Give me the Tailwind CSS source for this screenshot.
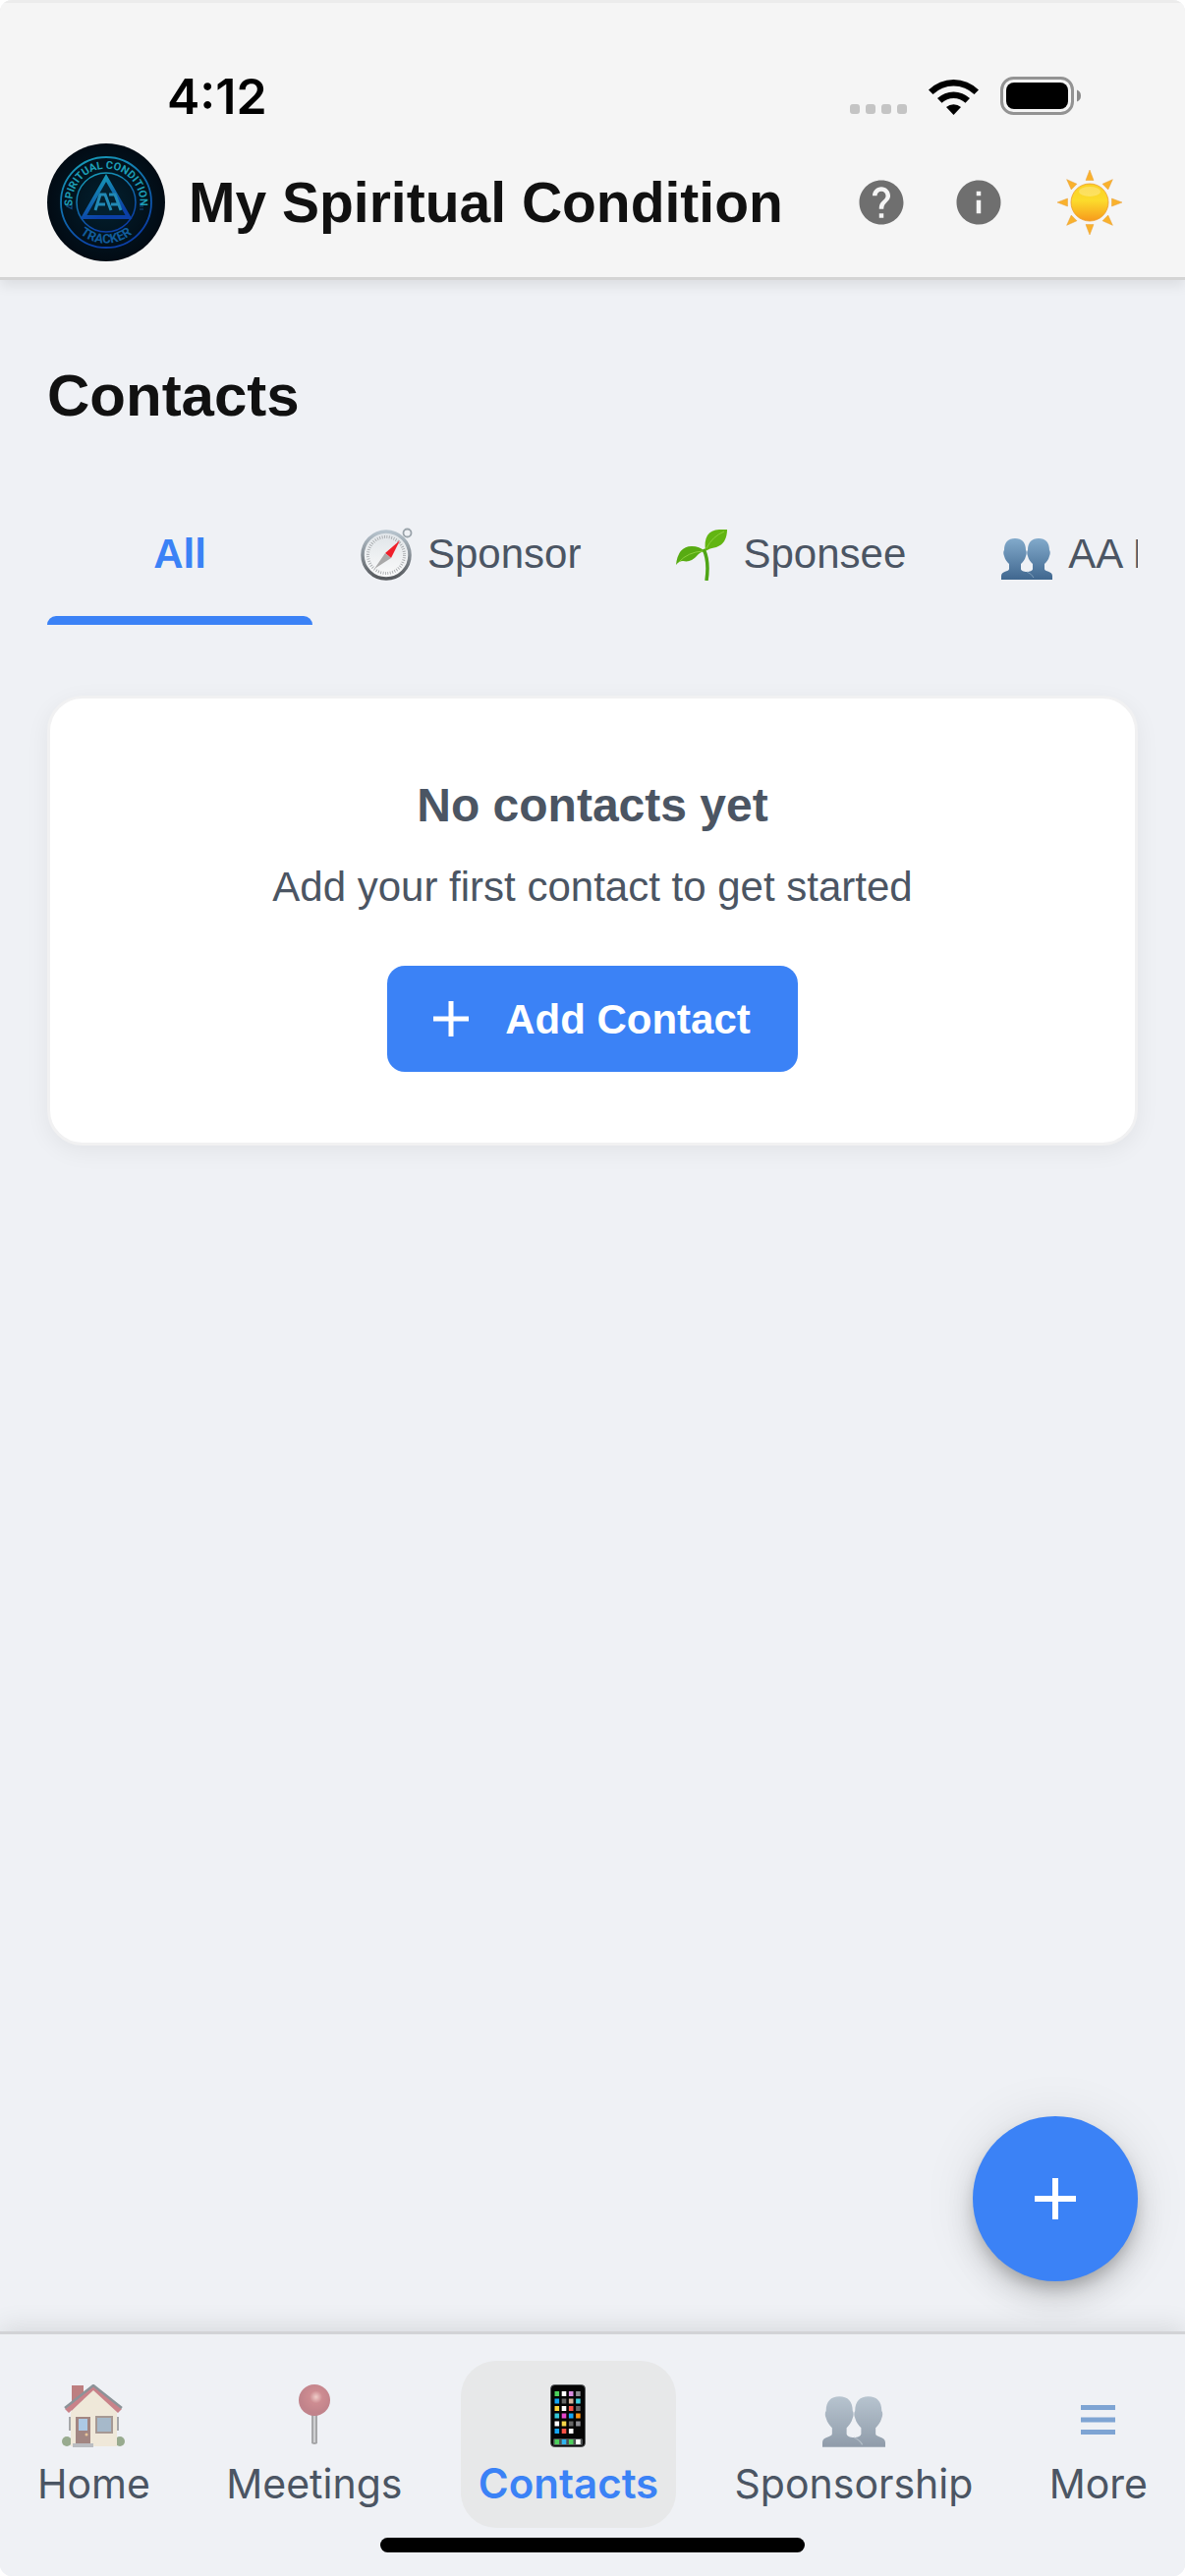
<!DOCTYPE html>
<html lang="en">
<head>
  <meta charset="UTF-8" />
  <meta name="viewport" content="width=device-width, initial-scale=1.0"/>
  <script src="https://cdn.jsdelivr.net/npm/@tailwindcss/browser@4"></script>
  <title>My Spiritual Condition - Contacts</title>
</head>

<body class="bg-white font-['Liberation_Sans',Arial,sans-serif] text-[#111]">

  <!-- shared shapes -->
  <svg class="absolute w-0 h-0" aria-hidden="true">
    <defs>
      <linearGradient id="people-fill" x1="0" y1="0" x2="0" y2="1">
        <stop offset="0" stop-color="#82aacb"/>
        <stop offset="1" stop-color="#40678f"/>
      </linearGradient>
    </defs>
    <symbol id="people" viewBox="0 0 52 42">
      <path fill="url(#people-fill)" d="M14 0C7 0 3 4 3 12c-1 1-1 4 0 6 1 4 3 6 5 8v5c0 3-8 2-8 7v4h52v-4c0-5-8-4-8-7v-5c2-2 4-4 5-8 1-2 1-5 0-6 0-8-4-12-11-12S27 4 27 12c-1 1-1 4 0 6 1 4 3 6 5 8v5c0 2-3 3-6 3s-6-1-6-3v-5c2-2 4-4 5-8 1-2 1-5 0-6C25 4 21 0 14 0z"/>
      <path d="M26 34q5 2 7 6" fill="none" stroke="#7f9fba" stroke-width="1"/>
    </symbol>
  </svg>

  <div class="min-h-screen flex flex-col rounded-xl overflow-hidden bg-[#eff1f5]">

    <header class="relative bg-[#f5f5f5] border-t-3 border-t-[#ececec] border-b-3 border-b-[#d4d4d4] shadow-[0_6px_12px_rgba(0,0,0,0.08)] pt-[69px] pb-4">
      <div class="flex items-center justify-between h-[52px] mb-[22px] pl-[170px] pr-[106px]">
        <span class="font-['Inter',sans-serif] font-semibold text-[50px] leading-none text-black">4:12</span>
        <div class="flex items-center">
          <svg class="w-[60px] h-[40px] mr-5" viewBox="0 0 60 40" fill="#c4c4c4">
            <rect x="0" y="28" width="10" height="10" rx="3"/>
            <rect x="16" y="28" width="10" height="10" rx="3"/>
            <rect x="32" y="28" width="10" height="10" rx="3"/>
            <rect x="48" y="28" width="10" height="10" rx="3"/>
          </svg>
          <svg class="w-[51px] h-[38px] mr-[22px]" viewBox="0 0 51 38">
            <path d="M0 12.500A36 36 0 0 1 51 12.500L46.500 17A30 30 0 0 0 4.500 17z"/>
            <path d="M9 21A24 24 0 0 1 42 21L37.500 25.800A17.500 17.500 0 0 0 13.500 25.800z"/>
            <path d="M18 30A11.500 11.500 0 0 1 33 30L25.500 38z"/>
          </svg>
          <svg class="w-[82px] h-[40px]" viewBox="0 0 82 40">
            <rect x="1.500" y="1.500" width="72" height="36" rx="12" fill="none" stroke="#939393" stroke-width="3"/>
            <rect x="6" y="6" width="63" height="27" rx="8"/>
            <path d="M78 13.500q4 1.500 4 6t-4 6z" fill="#8a8a8a"/>
          </svg>
        </div>
      </div>

      <div class="flex items-center px-12">
        <svg class="w-[120px] h-[120px] shrink-0" viewBox="0 0 120 120">
          <defs>
            <radialGradient id="logo-bg"><stop offset="0" stop-color="#02202f"/><stop offset="1" stop-color="#020b14"/></radialGradient>
            <linearGradient id="logo-ring" x1="0" y1="0" x2="0.4" y2="1"><stop offset="0" stop-color="#18a3b8"/><stop offset="1" stop-color="#0b3fa6"/></linearGradient>
            <path id="arc-top" d="M26 66A34.500 34.500 0 1 1 94 66"/>
            <path id="arc-bottom" d="M18.500 60A41.500 41.500 0 0 0 101.500 60"/>
          </defs>
          <circle cx="60" cy="60" r="60" fill="url(#logo-bg)"/>
          <circle cx="60" cy="60" r="46" fill="none" stroke="url(#logo-ring)" stroke-width="1.800"/>
          <circle cx="60" cy="60" r="30" fill="none" stroke="url(#logo-ring)" stroke-width="1.500"/>
          <path d="M60 35L83 75H37z" fill="#03202f" stroke="url(#logo-ring)" stroke-width="4"/>
          <path d="M49 68l5-16h5l6 16M51 62h8M63 52h6l6 16M65 62h8" fill="none" stroke="#2189b5" stroke-width="3"/>
          <path d="M20 64l5-2.500v5zM94 61h4M94 64h4M94 67h4" fill="none" stroke="#124b80" stroke-width="1.200"/>
          <text font-family="Roboto, sans-serif" font-weight="700" font-size="11" fill="#1c9db5" text-anchor="middle"><textPath href="#arc-top" startOffset="50%">SPIRITUAL CONDITION</textPath></text>
          <text font-family="Roboto, sans-serif" font-weight="700" font-size="13" fill="#115c9c" text-anchor="middle"><textPath href="#arc-bottom" startOffset="50%">TRACKER</textPath></text>
        </svg>
        <h1 class="ml-6 text-[57px] leading-[72px] font-bold whitespace-nowrap">My Spiritual Condition</h1>
        <div class="ml-auto flex items-center">
          <button class="w-[99px] h-[99px] flex items-center justify-center" aria-label="Help">
            <svg class="w-[54px] h-[54px]" viewBox="0 0 24 24" fill="#6f6f6f"><path d="M12 2C6.480 2 2 6.480 2 12s4.480 10 10 10 10-4.480 10-10S17.520 2 12 2zm1 17h-2v-2h2v2zm2.070-7.750l-.9.920C13.450 12.900 13 13.500 13 15h-2v-.5c0-1.100.45-2.100 1.170-2.830l1.240-1.260c.37-.36.590-.86.590-1.410 0-1.100-.9-2-2-2s-2 .9-2 2H8c0-2.210 1.790-4 4-4s4 1.790 4 4c0 .88-.36 1.680-.93 2.250z"/></svg>
          </button>
          <button class="w-[99px] h-[99px] flex items-center justify-center" aria-label="Info">
            <svg class="w-[54px] h-[54px]" viewBox="0 0 24 24" fill="#6f6f6f"><path d="M12 2C6.480 2 2 6.480 2 12s4.480 10 10 10 10-4.480 10-10S17.520 2 12 2zm1 15h-2v-6h2v6zm0-8h-2V7h2v2z"/></svg>
          </button>
          <button class="w-[99px] h-[99px] ml-[14px] flex items-center justify-center" aria-label="Toggle theme">
            <svg class="w-[66px] h-[66px]" viewBox="0 0 66 66">
              <defs>
                <linearGradient id="sun" x1="0" y1="0" x2="0" y2="1"><stop offset="0" stop-color="#fbd126"/><stop offset="0.450" stop-color="#fcdb2c"/><stop offset="1" stop-color="#f79a1c"/></linearGradient>
                <path id="ray" d="M33 0l4 10.500h-8z"/>
              </defs>
              <g fill="#f9b12c" stroke="#e9a03a" stroke-width="0.500">
                <use href="#ray"/>
                <use href="#ray" transform="rotate(45 33 33)"/>
                <use href="#ray" transform="rotate(90 33 33)"/>
                <use href="#ray" transform="rotate(135 33 33)"/>
                <use href="#ray" transform="rotate(180 33 33)"/>
                <use href="#ray" transform="rotate(225 33 33)"/>
                <use href="#ray" transform="rotate(270 33 33)"/>
                <use href="#ray" transform="rotate(315 33 33)"/>
              </g>
              <circle cx="33" cy="33" r="19" fill="url(#sun)" stroke="#ee9c2a" stroke-width="0.800"/>
              <ellipse cx="33" cy="22" rx="11" ry="5" fill="#fff" opacity="0.250"/>
            </svg>
          </button>
        </div>
      </div>
    </header>

    <main class="flex-1 px-12 pt-[82px]">
      <h2 class="text-[60px] leading-[72px] font-bold">Contacts</h2>

      <div class="mt-[52px] flex overflow-hidden text-[42px] leading-[48px] text-[#4b5563]">
        <button class="w-[270px] shrink-0 h-[145px] relative font-bold text-[#3b82f6]">
          All
          <span class="absolute inset-x-0 bottom-0 h-[9px] rounded-t-[9px] bg-[#3b82f6]"></span>
        </button>
        <button class="shrink-0 px-12 flex items-center gap-[15px]">
          <svg class="w-[54px] h-[54px]" viewBox="0 0 54 54">
            <defs>
              <linearGradient id="rim" x1="0" y1="0" x2="0" y2="1"><stop offset="0" stop-color="#b7c4ce"/><stop offset="1" stop-color="#55585c"/></linearGradient>
              <linearGradient id="dial" x1="0" y1="0" x2="0" y2="1"><stop offset="0" stop-color="#dfe4e8"/><stop offset="1" stop-color="#fbfbfb"/></linearGradient>
            </defs>
            <circle cx="48.500" cy="5.500" r="4" fill="none" stroke="#9aa3aa" stroke-width="1.800"/>
            <circle cx="27" cy="28" r="24" fill="url(#dial)" stroke="url(#rim)" stroke-width="3.500"/>
            <circle cx="27" cy="28" r="18.500" fill="none" stroke="#a2a5a8" stroke-width="3" stroke-dasharray="0.800 1.620"/>
            <path d="M41 13L32 31l-6-5z" fill="#f0202b"/>
            <path d="M15 42l11-16 6 5z" fill="#a9a9a9"/>
          </svg>
          Sponsor
        </button>
        <button class="shrink-0 px-12 flex items-center gap-[15px]">
          <svg class="w-[54px] h-[54px]" viewBox="0 0 54 54">
            <path d="M29 22q6 12 3 32" fill="none" stroke="#4ea516" stroke-width="3.500"/>
            <path d="M1 38Q3 19 17 19q8 0 13 5-5 1-8 5-6 7-14 5-4 0-7 4z" fill="#57ab12"/>
            <path d="M31 24Q28 3 45 2h8Q53 16 42 20q-7 1-11 4z" fill="#62b512"/>
            <path d="M4 35q9-10 24-11M32 21Q38 9 50 4" fill="none" stroke="#8bcf3d" stroke-width="1"/>
          </svg>
          Sponsee
        </button>
        <button class="shrink-0 px-12 flex items-center gap-[15px]">
          <svg class="w-[54px] h-[54px]" viewBox="0 0 54 54"><use href="#people" x="1" y="11" width="52" height="42"/></svg>
          AA Members
        </button>
      </div>

      <section class="mt-[72px] rounded-[36px] border-3 border-[#f1f1f2] bg-white shadow-[0_6px_24px_rgba(0,0,0,0.06)] pt-20 pb-[72px] flex flex-col items-center text-[#4b5563]">
        <h3 class="text-[48px] leading-[58px] font-bold">No contacts yet</h3>
        <p class="mt-6 text-[42px] leading-[60px]">Add your first contact to get started</p>
        <button class="mt-[50px] h-[108px] rounded-[18px] bg-[#3b82f6] pl-[46px] pr-12 flex items-center gap-9 text-[42px] font-bold text-white">
          <svg class="w-[38px] h-[38px]" viewBox="0 0 38 38" stroke="#fff" stroke-width="5"><path d="M19 1v36M1 19h36"/></svg>
          Add Contact
        </button>
      </section>
    </main>

    <footer class="relative border-t-3 border-[#d2d3d6] bg-[#eff1f5] shadow-[0_-6px_24px_rgba(0,0,0,0.09)] pt-[27px] pb-6">
      <button class="absolute right-12 bottom-full mb-[54px] w-[168px] h-[168px] rounded-full bg-[#3b82f6] flex items-center justify-center shadow-[0_9px_15px_-3px_rgba(0,0,0,0.2),0_18px_30px_rgba(0,0,0,0.12),0_3px_54px_rgba(0,0,0,0.1)]" aria-label="Add contact">
        <svg class="w-[42px] h-[42px]" viewBox="0 0 42 42" stroke="#fff" stroke-width="6"><path d="M21 0v42M0 21h42"/></svg>
      </button>

      <nav class="flex justify-between px-5 font-['Inter',sans-serif] text-[41px] leading-[50px] text-[#4b5563]">
        <a href="#" class="h-[170px] px-[18px] pt-6 flex flex-col items-center">
          <svg class="w-[64px] h-[64px] mb-3 opacity-60" viewBox="0 0 64 64">
            <ellipse cx="5" cy="58" rx="5" ry="5" fill="#5f7d4c"/>
            <ellipse cx="59" cy="58" rx="5" ry="5" fill="#5f7d4c"/>
            <path d="M10 1h12v14l-12 12z" fill="#9c3434"/>
            <path d="M9 28L32 5l24 23v35H9z" fill="#f0e3c8"/>
            <path d="M3 25L32 1l29 24-4 4L32 6 7 29z" fill="#b03a42"/>
            <path d="M3 24L32 1l29 23" fill="none" stroke="#4b555c" stroke-width="2.500"/>
            <path d="M14 33h15v29H14z" fill="#704036"/>
            <path d="M17 35h9v12h-9z" fill="#80b0dc"/>
            <path d="M35 33h16v16H35z" fill="#7695ae" stroke="#775f55" stroke-width="2"/>
            <path d="M8 33v14M57 33v14" stroke="#777" stroke-width="2"/>
            <path d="M11 60h21v4H11z" fill="#989ba0"/>
            <circle cx="25" cy="51" r="1.500" fill="#e4a95e"/>
          </svg>
          Home
        </a>
        <a href="#" class="h-[170px] px-[18px] pt-6 flex flex-col items-center">
          <svg class="w-[32px] h-[64px] mb-3 opacity-60" viewBox="0 0 32 64">
            <defs><radialGradient id="pin" cx="0.550" cy="0.400"><stop offset="0" stop-color="#f0b6ae"/><stop offset="0.400" stop-color="#b84a50"/><stop offset="1" stop-color="#a33b45"/></radialGradient></defs>
            <path d="M13 30h6v30q-3 2-6 0z" fill="#777"/>
            <path d="M15 32h2v27h-2z" fill="#bbb"/>
            <circle cx="16" cy="16" r="16" fill="url(#pin)"/>
          </svg>
          Meetings
        </a>
        <a href="#" aria-current="page" class="h-[170px] px-[18px] pt-6 flex flex-col items-center rounded-[36px] bg-[#e7e8e9] text-[42px] font-semibold text-[#3b82f6]">
          <svg class="w-[36px] h-[64px] mb-3" viewBox="0 0 36 64">
            <rect x="0.500" y="0.500" width="35" height="63" rx="4" fill="#050505" stroke="#55585a" stroke-width="1"/>
            <rect x="3" y="55" width="30" height="7" rx="1.500" fill="#4c5052"/>
            <g stroke-width="5">
              <path d="M4.500 9.500h4.600" stroke="#4cd05c"/><path d="M11.700 9.500h4.600" stroke="#fff"/><path d="M18.900 9.500h4.600" stroke="#d98be0"/><path d="M26.100 9.500h4.600" stroke="#8c8c91"/>
              <path d="M4.500 17h4.600" stroke="#14a5f5"/><path d="M11.700 17h4.600" stroke="#666"/><path d="M18.900 17h4.600" stroke="#d5b49d"/><path d="M26.100 17h4.600" stroke="#3ed0de"/>
              <path d="M4.500 24.500h4.600" stroke="#fbd43a"/><path d="M11.700 24.500h4.600" stroke="#fff"/><path d="M18.900 24.500h4.600" stroke="#fa5246"/><path d="M26.100 24.500h4.600" stroke="#666"/>
              <path d="M4.500 32h4.600" stroke="#35c9d6"/><path d="M11.700 32h4.600" stroke="#e545cc"/><path d="M18.900 32h4.600" stroke="#14a5f5"/><path d="M26.100 32h4.600" stroke="#fd9312"/>
              <path d="M4.500 40h4.600" stroke="#fff"/><path d="M11.700 40h4.600" stroke="#f7d648"/><path d="M18.900 40h4.600" stroke="#666"/><path d="M26.100 40h4.600" stroke="#8c8c91"/>
              <path d="M4.500 47.500h4.600" stroke="#14a5f5"/><path d="M11.700 47.500h4.600" stroke="#fa5246"/><path d="M18.900 47.500h4.600" stroke="#fff"/>
              <path d="M4.500 58.500h4.600" stroke="#4cd05c"/><path d="M11.700 58.500h4.600" stroke="#2fb4ef"/><path d="M18.900 58.500h4.600" stroke="#4cd05c"/><path d="M26.100 58.500h4.600" stroke="#fff"/>
            </g>
          </svg>
          Contacts
        </a>
        <a href="#" class="h-[170px] px-[18px] pt-6 flex flex-col items-center">
          <svg class="w-[64px] h-[64px] mb-3 opacity-60 grayscale-50" viewBox="0 0 64 64"><use href="#people" x="0" y="12" width="64" height="52"/></svg>
          Sponsorship
        </a>
        <a href="#" class="h-[170px] px-[18px] pt-6 flex flex-col items-center">
          <svg class="w-[36px] h-[64px] mb-3" viewBox="0 0 36 64" stroke="#7ea4d3" stroke-width="5"><path d="M0 23.500h35M0 36h35M0 48.500h35"/></svg>
          More
        </a>
      </nav>
      <div class="mx-auto mt-[10px] w-[432px] h-[15px] rounded-full bg-black"></div>
    </footer>
  </div>

</body>
</html>
